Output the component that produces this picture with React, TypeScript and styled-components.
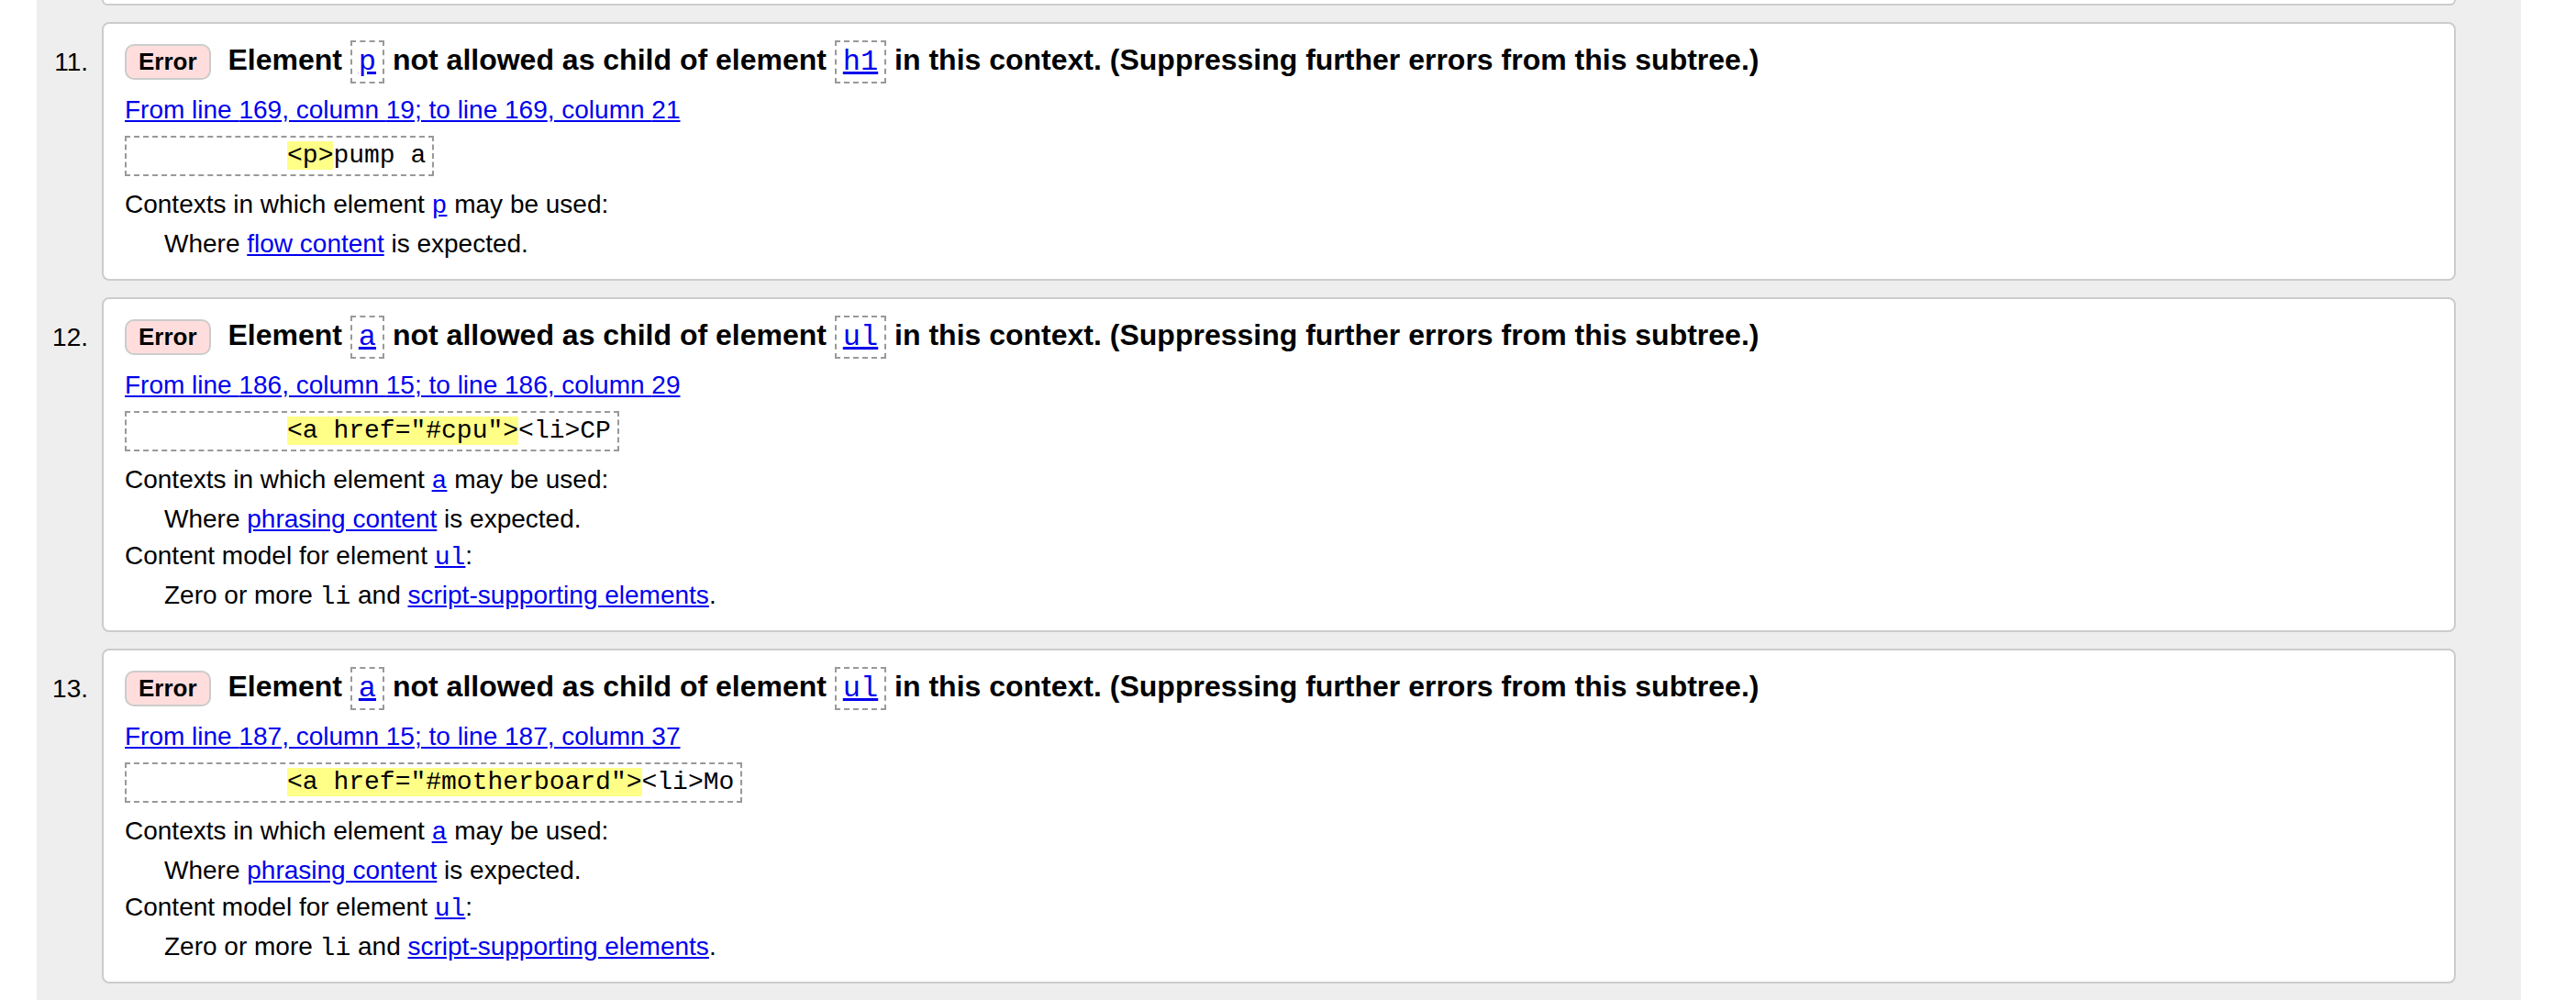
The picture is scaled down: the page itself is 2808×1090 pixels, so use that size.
import styled, { createGlobalStyle } from "styled-components";

const GlobalStyle = createGlobalStyle`
    html, body {
        margin: 0;
        padding: 0;
        background: #fff;
    }
    body {
        font-family: "Liberation Sans", Arial, Helvetica, sans-serif;
        color: #000;
    }
`

const Page = styled.div`
    margin-left: 40px;
    width: 2708px;
    height: 100vh;
    background: #eee;
    padding-right: 71px;
    box-sizing: border-box;
    overflow: hidden;
`

// the cards above and below the visible window are only partly on screen
const CardEdge = styled.div<{ $top?: boolean }>`
    margin: ${props => props.$top ? "0 0 18px 71px" : "18px 0 0 71px"};
    height: 40px;
    background: #fff;
    border: 2px solid #ccc;
    border-${props => props.$top ? "top" : "bottom"}: none;
    border-radius: ${props => props.$top ? "0 0 8px 8px" : "8px 8px 0 0"};
    ${props => props.$top && "height: 4px;"}
`

const List = styled.ol`
    list-style: none;
    margin: 0;
    padding: 0;
    display: flex;
    flex-direction: column;
    gap: 18px;
`

const Item = styled.li`
    display: grid;
    grid-template-columns: 71px 1fr;
`

const Marker = styled.span`
    padding: 24px 15px 0 0;
    text-align: right;
    font-size: 28px;
    line-height: 40px;
`

const Card = styled.div`
    background: #fff;
    border: 2px solid #ccc;
    border-radius: 8px;
    padding: 18px 23px;
`

const Title = styled.p`
    margin: 0;
    font-size: 32px;
    font-weight: bold;
    line-height: 36px;
`

const Badge = styled.span`
    display: inline-block;
    margin-right: 10px;
    padding: 3px 13px;
    font-size: 26px;
    line-height: 29px;
    background: #fdd;
    border: 2px solid #ccc;
    border-radius: 10px;
`

const CodeBox = styled.code`
    display: inline-block;
    padding: 3px 7px;
    border: 2px dashed #999;
    font-family: "Liberation Mono", "Courier New", monospace;
    font-weight: normal;
    font-size: 32px;
    line-height: 37px;
`

const Link = styled.a`
    color: #00e;
    text-decoration: underline;
`

const Location = styled.p`
    margin: 9px 0 0;
    font-size: 28px;
    line-height: 40px;
`

const Extract = styled.pre`
    width: fit-content;
    margin: 8px 0 0;
    padding: 4px 7px;
    border: 2px dashed #999;
    font-family: "Liberation Mono", "Courier New", monospace;
    font-size: 28px;
    line-height: 32px;
    white-space: pre;
`

const Hit = styled.mark`
    background: #ff8;
    color: inherit;
`

const Details = styled.dl`
    margin: 11px 0 0;
    font-size: 28px;
    line-height: 40px;
`

const Term = styled.dt`
    margin: 0;
`

const Desc = styled.dd`
    margin: 3px 0 0 43px;
`

const Code = styled.code`
    font-family: "Liberation Mono", "Courier New", monospace;
    font-size: 28px;
    line-height: 1;
`

interface Problem {
    n: number;
    child: string;
    parent: string;
    line: number;
    cols: [number, number];
    hit: string;
    rest: string;
    context: string;
    model: boolean;
}

const problems: Problem[] = [
    { n: 11, child: "p", parent: "h1", line: 169, cols: [19, 21], hit: "<p>", rest: "pump a", context: "flow content", model: false },
    { n: 12, child: "a", parent: "ul", line: 186, cols: [15, 29], hit: "<a href=\"#cpu\">", rest: "<li>CP", context: "phrasing content", model: true },
    { n: 13, child: "a", parent: "ul", line: 187, cols: [15, 37], hit: "<a href=\"#motherboard\">", rest: "<li>Mo", context: "phrasing content", model: true },
];

function App() {
    return (
        <>
            <GlobalStyle />
            <Page>
                <CardEdge $top />
                <List>
                    {problems.map(p => (
                        <Item key={p.n}>
                            <Marker>{p.n}.</Marker>
                            <Card>
                                <Title>
                                    <Badge>Error</Badge>{" "}
                                    Element{" "}
                                    <CodeBox><Link href="#">{p.child}</Link></CodeBox>{" "}
                                    not allowed as child of element{" "}
                                    <CodeBox><Link href="#">{p.parent}</Link></CodeBox>{" "}
                                    in this context. (Suppressing further errors from this subtree.)
                                </Title>
                                <Location>
                                    <Link href="#">
                                        From line {p.line}, column {p.cols[0]}; to line {p.line}, column {p.cols[1]}
                                    </Link>
                                </Location>
                                <Extract>{"          "}<Hit>{p.hit}</Hit>{p.rest}</Extract>
                                <Details>
                                    <Term>
                                        Contexts in which element <Code><Link href="#">{p.child}</Link></Code> may be used:
                                    </Term>
                                    <Desc>
                                        Where <Link href="#">{p.context}</Link> is expected.
                                    </Desc>
                                    {p.model && (
                                        <>
                                            <Term>
                                                Content model for element <Code><Link href="#">{p.parent}</Link></Code>:
                                            </Term>
                                            <Desc>
                                                Zero or more <Code>li</Code> and <Link href="#">script-supporting elements</Link>.
                                            </Desc>
                                        </>
                                    )}
                                </Details>
                            </Card>
                        </Item>
                    ))}
                </List>
                <CardEdge />
            </Page>
        </>
    )
}

export default App;
